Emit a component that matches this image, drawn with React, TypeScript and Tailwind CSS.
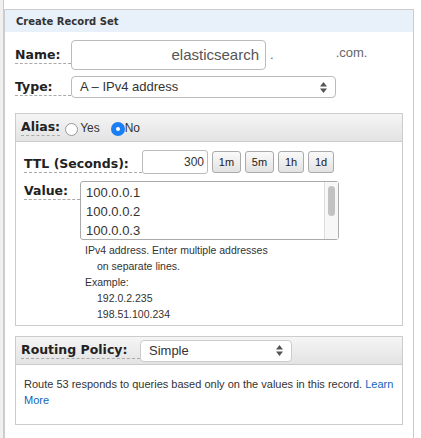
import React from 'react';

const lbl = "font-[DejaVu_Sans,sans-serif] font-bold text-[12.5px] text-[#222] border-b border-dashed border-[#aaa] leading-[16px]";

function Arrows() {
  return (
    <svg width="7" height="11" viewBox="0 0 7 11" className="fill-[#555]">
      <path d="M3.5 0L7 4.5H0z M3.5 11L0 6.5h7z" />
    </svg>
  );
}

export default function App() {
  return (
    <div className="w-[421px] h-[438px] bg-white overflow-hidden relative font-[Liberation_Sans,Arial,sans-serif] text-[#333]">
      <div className="absolute left-0 top-0 w-[4px] h-full bg-[#f0f0f0] border-r border-[#ccc]" />
      <div className="ml-[4px] mt-[9px] w-[410px] h-[440px] border border-[#ccc]">
        <div className="h-[22px] bg-[#e8f0fa] pl-[11px] flex items-center font-[DejaVu_Sans,sans-serif] font-bold text-[10px] text-[#333]">
          Create Record Set
        </div>
        <div className="pl-[10px] pt-[8px]">
          <div className="flex items-center h-[30px]">
            <span className={`${lbl} w-[56px]`}>Name:</span>
            <div className="w-[195px] h-[30px] border border-[#bbb] rounded-[4px] flex items-center justify-end pr-[6px] text-[15px] text-[#555]">elasticsearch</div>
            <span className="ml-[4px] text-[13px] text-[#666]">.</span>
            <span className="ml-[62px] text-[13px] text-[#666] -mt-[4px]">.com.</span>
          </div>
          <div className="flex items-center mt-[6px] h-[22px]">
            <span className={`${lbl} w-[56px]`}>Type:</span>
            <div className="w-[265px] h-[22px] border border-[#bbb] rounded-[4px] flex items-center justify-between px-[8px] text-[13px] text-[#333]">
              <span>A – IPv4 address</span><Arrows />
            </div>
          </div>
          <div className="mt-[15px] w-[388px] h-[213px] border border-[#ccc]">
            <div className="h-[28px] bg-gradient-to-b from-[#f5f5f5] to-[#e3e3e3] border-b border-[#ccc] flex items-center pl-[5px] text-[12px]">
              <span className={lbl}>Alias:</span>
              <span className="ml-[5px] w-[13px] h-[13px] rounded-full border border-[#999] bg-white mt-[3px]" />
              <span className="ml-[2px]">Yes</span>
              <span className="ml-[11px] w-[14px] h-[14px] rounded-full bg-[#1a7ef5] mt-[3px] flex items-center justify-center">
                <span className="w-[4px] h-[4px] rounded-full bg-white" />
              </span>
              <span>No</span>
            </div>
            <div className="pl-[8px] pt-[8px]">
              <div className="flex items-center h-[24px]">
                <span className={`${lbl} w-[118px] mt-[5px]`}>TTL (Seconds):</span>
                <div className="w-[66px] h-[24px] border border-[#bbb] rounded-[3px] flex items-center justify-end pr-[3px] text-[12px]">300</div>
                {['1m', '5m', '1h', '1d'].map((t) => (
                  <div key={t} className={`ml-[4px] ${t === '1h' || t === '1d' ? 'w-[26px]' : 'w-[29px]'} h-[22px] border border-[#aaa] rounded-[3px] bg-gradient-to-b from-[#fafafa] to-[#e2e2e2] flex items-center justify-center text-[11px] text-[#222]`}>{t}</div>
                ))}
              </div>
              <div className="flex mt-[7px]">
                <span className={`${lbl} w-[56px] self-start mt-[2px]`}>Value:</span>
                <div>
                  <div className="w-[259px] h-[59px] border border-[#aaa] rounded-[3px] flex text-[13px] leading-[19px] text-[#333]">
                    <div className="flex-1 pl-[5px] pt-[1px]">
                      <div>100.0.0.1</div><div>100.0.0.2</div><div>100.0.0.3</div>
                    </div>
                    <div className="w-[14px] border-l border-[#ddd] bg-[#f7f7f7] flex justify-center pt-[4px]">
                      <div className="w-[7px] h-[30px] rounded-full bg-[#c2c2c2]" />
                    </div>
                  </div>
                  <div className="pl-[5px] pt-[2px] text-[10.5px] leading-[16px] text-[#333]">
                    <div>IPv4 address. Enter multiple addresses</div>
                    <div className="pl-[12px]">on separate lines.</div>
                    <div>Example:</div>
                    <div className="pl-[12px]">192.0.2.235</div>
                    <div className="pl-[12px]">198.51.100.234</div>
                  </div>
                </div>
              </div>
            </div>
          </div>
          <div className="mt-[10px] w-[388px] h-[89px] border border-[#ccc]">
            <div className="h-[28px] bg-gradient-to-b from-[#f5f5f5] to-[#e3e3e3] border-b border-[#ccc] flex items-center pl-[5px]">
              <span className={`${lbl} w-[119px]`}>Routing Policy:</span>
              <div className="w-[152px] h-[22px] bg-white border border-[#ccc] rounded-[4px] flex items-center justify-between pl-[8px] pr-[8px] text-[13px]">
                <span>Simple</span><Arrows />
              </div>
            </div>
            <div className="px-[8px] pt-[11px] text-[11px] leading-[16px] text-[#333]">
              Route 53 responds to queries based only on the values in this record. <span className="text-[#1166bb]">Learn More</span>
            </div>
          </div>
        </div>
      </div>
    </div>
  );
}
